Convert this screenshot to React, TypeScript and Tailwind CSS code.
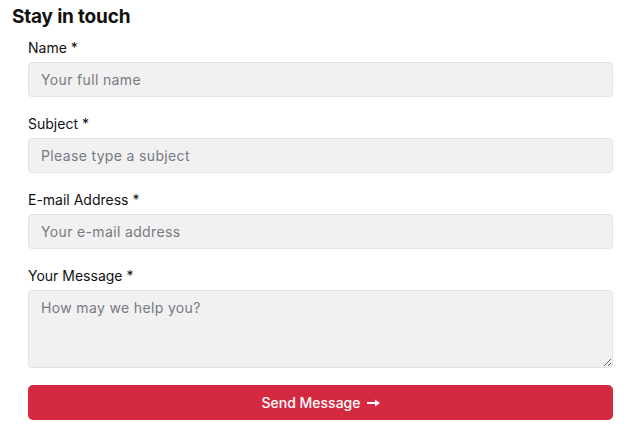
import React from "react";

const font = { fontFamily: "Inter, 'Noto Sans', sans-serif" };

function Field({ label, placeholder }: { label: string; placeholder: string }) {
  return (
    <div className="mt-[16px] first:mt-[8px]">
      <label className="block text-[14px] leading-[21px] mb-[4px] text-[#111]">{label}</label>
      <input
        className="block w-full h-[35px] rounded-[4px] border border-[#e2e2e2] bg-[#f1f1f1] px-[12px] text-[14px] tracking-[0.35px] text-[#333] placeholder:text-[#767a83] outline-none"
        placeholder={placeholder}
      />
    </div>
  );
}

export default function App() {
  return (
    <div className="w-[635px] h-[444px] bg-white px-[12px] pt-[5px]" style={font}>
      <h2 className="text-[19px] leading-[24px] font-bold text-[#111] tracking-[-0.2px]">Stay in touch</h2>
      <form className="ml-[16px] mr-[10px]" onSubmit={(e) => e.preventDefault()}>
        <Field label="Name *" placeholder="Your full name" />
        <Field label="Subject *" placeholder="Please type a subject" />
        <Field label="E-mail Address *" placeholder="Your e-mail address" />
        <div className="mt-[16px]">
          <label className="block text-[14px] leading-[21px] mb-[4px] text-[#111]">Your Message *</label>
          <textarea
            className="block w-full h-[78px] rounded-[4px] border border-[#e2e2e2] bg-[#f1f1f1] px-[12px] py-[5px] text-[14px] leading-[24px] tracking-[0.35px] text-[#333] placeholder:text-[#767a83] outline-none"
            placeholder="How may we help you?"
          />
        </div>
        <button
          type="submit"
          className="mt-[17px] flex w-full h-[35px] items-center justify-center gap-[6px] rounded-[5px] bg-[#d42940] text-white text-[14px] font-medium"
        >
          <span>Send Message</span>
          <svg width="13" height="8" viewBox="0 0 13 8">
            <path d="M0 4 H9" stroke="white" strokeWidth="2" />
            <path d="M8 0.5 L13 4 L8 7.5 Z" fill="white" />
          </svg>
        </button>
      </form>
    </div>
  );
}
